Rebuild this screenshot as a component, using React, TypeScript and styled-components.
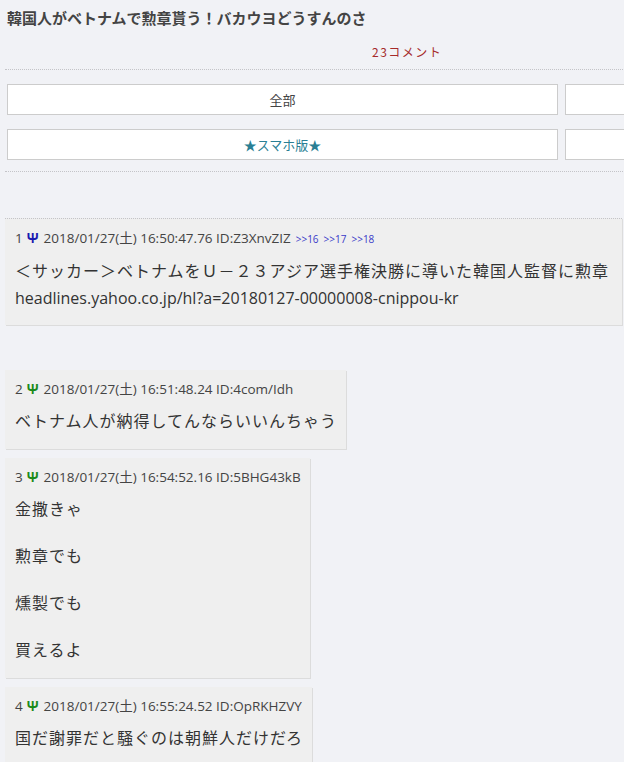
import styled, { createGlobalStyle } from "styled-components";

const GlobalStyle = createGlobalStyle`
  html, body {
    margin: 0;
    padding: 0;
    background: #f1f2f6;
  }
  body {
    font-family: "Open Sans", "Noto Sans CJK JP", sans-serif;
    color: #333;
    overflow: hidden;
  }
`;

const Page = styled.div`
  width: 1120px;
  padding: 6px 0 0 5px;
`;

const Title = styled.h1`
  margin: 0 0 0 2px;
  font-family: "Noto Sans CJK JP", sans-serif;
  font-size: 15px;
  font-weight: bold;
  letter-spacing: 0;
  line-height: 24px;
  color: #444;
`;

const CountRow = styled.div`
  padding: 12px 0 0 367px;
  height: 39px;
  box-sizing: border-box;
  line-height: 18px;
`;

const Count = styled.a`
  font-family: "Noto Sans CJK JP", sans-serif;
  font-size: 12px;
  letter-spacing: 1.5px;
  color: #a52a2a;
  text-decoration: none;
`;

const Divider = styled.div`
  border-top: 1px dotted #c4c4c8;
`;

const ButtonGrid = styled.div`
  display: grid;
  grid-template-columns: 551px 551px;
  column-gap: 7px;
  row-gap: 14px;
  padding: 14px 0 11px 2px;
`;

const NavButton = styled.a<{ $accent?: boolean }>`
  display: flex;
  align-items: center;
  justify-content: center;
  height: 31px;
  box-sizing: border-box;
  background: #fff;
  border: 1px solid #ccc;
  font-family: "Noto Sans CJK JP", sans-serif;
  font-size: 13px;
  color: ${(p) => (p.$accent ? "#2a7f94" : "#444")};
  text-decoration: none;
`;

const Spacer = styled.div<{ $h: number }>`
  height: ${(p) => p.$h}px;
`;

const Thread = styled.div`
  display: flex;
  flex-direction: column;
  align-items: flex-start;
  gap: 9px;
`;

const Post = styled.div<{ $first?: boolean }>`
  background: #efefef;
  box-shadow: 1px 1px 0 #dcdcdc;
  padding: 9px ${(p) => (p.$first ? "13px" : "9px")} ${(p) => (p.$first ? "13px" : "14px")} 10px;
  border-top: ${(p) => (p.$first ? "1px dotted #c4c4c8" : "none")};
  margin-bottom: ${(p) => (p.$first ? "36px" : "0")};
`;

const Head = styled.div`
  font-family: "Open Sans", "Noto Sans CJK JP", sans-serif;
  font-size: 13.5px;
  line-height: 20px;
  color: #444;
  white-space: nowrap;
`;

const Psi = styled.b<{ $color: string }>`
  color: ${(p) => p.$color};
  margin: 0 5px 0 4px;
`;

const Anchor = styled.a`
  font-size: 10px;
  color: #3a3ac8;
  margin-left: 5px;
  text-decoration: none;
`;

const Body = styled.div<{ $gap: number }>`
  display: flex;
  flex-direction: column;
  gap: ${(p) => p.$gap}px;
  margin-top: 9px;
  font-family: "Open Sans", "Noto Sans CJK JP", sans-serif;
  font-size: 16px;
  letter-spacing: 1px;
  line-height: 27px;
  color: #333;
  white-space: nowrap;
`;

const Link = styled.span`
  letter-spacing: 0;
  font-size: 16px;
`;

type PostData = {
  no: number;
  date: string;
  id: string;
  anchors?: number[];
  lines: string[];
  gap: number;
};

const posts: PostData[] = [
  {
    no: 1,
    date: "2018/01/27(土) 16:50:47.76",
    id: "Z3XnvZIZ",
    anchors: [16, 17, 18],
    lines: ["＜サッカー＞ベトナムをＵ－２３アジア選手権決勝に導いた韓国人監督に勲章"],
    gap: 0,
  },
  {
    no: 2,
    date: "2018/01/27(土) 16:51:48.24",
    id: "4com/Idh",
    lines: ["ベトナム人が納得してんならいいんちゃう"],
    gap: 0,
  },
  {
    no: 3,
    date: "2018/01/27(土) 16:54:52.16",
    id: "5BHG43kB",
    lines: ["金撒きゃ", "勲章でも", "燻製でも", "買えるよ"],
    gap: 20,
  },
  {
    no: 4,
    date: "2018/01/27(土) 16:55:24.52",
    id: "OpRKHZVY",
    lines: ["国だ謝罪だと騒ぐのは朝鮮人だけだろ"],
    gap: 0,
  },
];

export default function App() {
  return (
    <>
      <GlobalStyle />
      <Page>
        <Title>韓国人がベトナムで勲章貰う！バカウヨどうすんのさ</Title>
        <CountRow>
          <Count href="#">23コメント</Count>
        </CountRow>
        <Divider />
        <ButtonGrid>
          <NavButton href="#">全部</NavButton>
          <NavButton href="#" />
          <NavButton href="#" $accent>
            ★スマホ版★
          </NavButton>
          <NavButton href="#" />
        </ButtonGrid>
        <Divider />
        <Spacer $h={46} />
        <Thread>
          {posts.map((p) => (
            <Post key={p.no} $first={p.no === 1}>
              <Head>
                {p.no}
                <Psi $color={p.no === 1 ? "#1a1ab0" : "#1a8a1a"}>Ψ</Psi>
                {p.date} ID:{p.id}
                {p.anchors?.map((a) => (
                  <Anchor key={a} href="#">
                    &gt;&gt;{a}
                  </Anchor>
                ))}
              </Head>
              <Body $gap={p.gap}>
                {p.lines.map((l) => (
                  <div key={l}>{l}</div>
                ))}
                {p.no === 1 && (
                  <Link>headlines.yahoo.co.jp/hl?a=20180127-00000008-cnippou-kr</Link>
                )}
              </Body>
            </Post>
          ))}
        </Thread>
      </Page>
    </>
  );
}
